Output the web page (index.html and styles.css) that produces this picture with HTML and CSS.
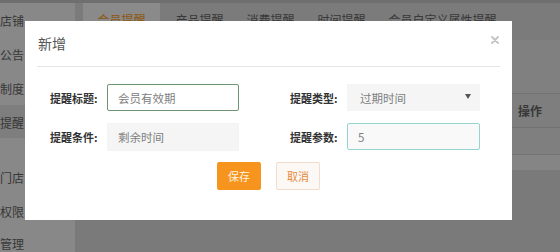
FILE: index.html
```html
<!DOCTYPE html>
<html lang="zh-CN">
<head>
<meta charset="utf-8">
<title>提醒设置 - 新增</title>
<link rel="stylesheet" href="styles.css">
</head>
<body>
<div class="page">
  <aside class="sidebar">
    <div class="nav-item">店铺</div>
    <div class="nav-item">公告</div>
    <div class="nav-item">制度</div>
    <div class="nav-item active">提醒</div>
    <div class="nav-item group-start">门店</div>
    <div class="nav-item">权限</div>
    <div class="nav-item last">管理</div>
  </aside>
  <main class="main">
    <nav class="tabs">
      <span class="tab active">会员提醒</span>
      <span class="tab">产品提醒</span>
      <span class="tab">消费提醒</span>
      <span class="tab">时间提醒</span>
      <span class="tab">会员自定义属性提醒</span>
    </nav>
    <div class="toolbar"></div>
    <div class="table">
      <div class="row head"><span class="cell grow"></span><span class="cell op">操作</span></div>
      <div class="row"><span class="cell grow"></span><span class="cell op"></span></div>
      <div class="row alt"><span class="cell grow"></span><span class="cell op"></span></div>
    </div>
  </main>
</div>

<div class="mask"></div>

<div class="modal">
  <div class="modal-header">
    <h3 class="modal-title">新增</h3>
    <button class="close" type="button" aria-label="关闭">
      <svg width="8" height="8" viewBox="0 0 8 8"><path d="M1 1 L7 7 M7 1 L1 7" stroke="#c3c3c3" stroke-width="1.8" stroke-linecap="round"/></svg>
    </button>
  </div>
  <div class="modal-body">
    <div class="form-grid">
      <label class="form-label">提醒标题:</label>
      <input class="input input-focus" type="text" value="会员有效期">
      <label class="form-label second">提醒类型:</label>
      <div class="input select"><span>过期时间</span><i class="caret"></i></div>

      <label class="form-label">提醒条件:</label>
      <div class="input readonly">剩余时间</div>
      <label class="form-label second">提醒参数:</label>
      <input class="input input-teal" type="text" value="5">
    </div>
    <div class="actions">
      <button class="btn btn-primary" type="button">保存</button>
      <button class="btn btn-default" type="button">取消</button>
    </div>
  </div>
</div>
</body>
</html>
```

FILE: styles.css
```css
* { box-sizing: border-box; }

html, body {
  margin: 0;
  padding: 0;
  width: 560px;
  height: 252px;
  overflow: hidden;
}

body {
  font-family: "Noto Sans CJK SC", "Liberation Sans", sans-serif;
  background: #dedede;
  color: #666;
  border-top: 3px solid #cacaca;
}

.page {
  display: flex;
  height: 249px;
}

/* sidebar */
.sidebar {
  width: 75px;
  flex: none;
  background: #f8f8f8;
  display: flex;
  flex-direction: column;
  overflow: hidden;
}

.nav-item {
  height: 34px;
  flex: none;
  display: flex;
  align-items: center;
  font-size: 12px;
  line-height: 1;
  color: #666;
  padding: 2px 0 0 0;
}

.nav-item.active {
  background: #e6e6e6;
  height: 33px;
}

.nav-item.group-start { margin-top: 22px; }

.nav-item.last {
  height: 24px;
  align-items: flex-end;
  padding: 0 0 2px 0;
}

/* main */
.main {
  flex: 1;
  display: flex;
  flex-direction: column;
  padding-left: 8px;
}

.tabs {
  height: 37px;
  display: flex;
  align-items: stretch;
  background: #e0e0e0;
  margin-left: -8px;
  padding-left: 8px;
}

.tab {
  display: flex;
  align-items: center;
  padding: 0 11.5px 5px;
  font-size: 12px;
  color: #666;
  white-space: nowrap;
}

.tab.active {
  background: #fbfbfb;
  color: #ff9f1c;
  padding: 0 14.5px 5px;
  margin-right: 4px;
}

.toolbar {
  height: 53px;
  background: #e9e9e9;
  margin-left: -8px;
}

.table {
  display: flex;
  flex-direction: column;
  margin-left: -8px;
}

.row {
  display: flex;
  height: 27px;
  background: #e8e8e8;
  border-bottom: 1px solid #d2d2d2;
}

.row.head {
  height: 35px;
  border-top: 1px solid #d2d2d2;
  background: #e6e6e6;
}

.row.alt {
  height: 15px;
  background: #f2f2f2;
  border-bottom: none;
}

.cell.grow { flex: 1; }

.cell.op {
  width: 48px;
  display: flex;
  align-items: center;
  font-size: 12px;
  font-weight: 700;
  color: #666;
  padding-left: 6px;
}

/* overlay */
.mask {
  position: fixed;
  inset: 0;
  background: rgba(0, 0, 0, 0.45);
}

/* modal */
.modal {
  position: fixed;
  left: 25px;
  top: 21px;
  width: 487px;
  height: 199px;
  background: #fff;
  display: flex;
  flex-direction: column;
}

.modal-header {
  height: 46px;
  margin: 0 12px;
  border-bottom: 1px solid #e5e5e5;
  display: flex;
  align-items: center;
  justify-content: space-between;
  padding-bottom: 1px;
}

.modal-title {
  margin: 0 0 0 1px;
  font-size: 14px;
  font-weight: 400;
  color: #555;
}

.close {
  border: 0;
  background: transparent;
  padding: 0;
  margin: 0 1px 6px 0;
  width: 8px;
  height: 8px;
  display: flex;
}

.modal-body {
  padding: 17px 32px 0 25px;
}

.form-grid {
  display: grid;
  grid-template-columns: 47px 132px 88px 133px;
  grid-auto-rows: 27px;
  column-gap: 10px;
  row-gap: 12px;
  align-items: center;
}

.form-label {
  font-size: 11px;
  font-weight: 700;
  color: #333;
  white-space: nowrap;
}

.form-label.second { margin-left: 41px; }

.input {
  height: 27px;
  width: 100%;
  margin: 0;
  border: 1px solid transparent;
  padding: 0 10px;
  font-family: "Noto Sans CJK SC", "Liberation Sans", sans-serif;
  font-size: 11.5px;
  color: #808080;
  background: #f5f5f5;
  outline: none;
  display: flex;
  align-items: center;
}

.input-focus {
  background: #fff;
  border-color: #6f9472;
  border-radius: 2px;
}

.input-teal {
  background: #f9f9f9;
  border-color: #94d6cf;
  border-radius: 2px;
}

.readonly {
  height: 28px;
  border-color: #f3f3f3;
}

.select {
  justify-content: space-between;
  padding: 0 8px 0 12px;
}

.caret {
  width: 0;
  height: 0;
  border-left: 3px solid transparent;
  border-right: 3px solid transparent;
  border-top: 5px solid #555;
  margin-top: -2px;
}

.actions {
  display: flex;
  justify-content: center;
  gap: 15px;
  margin-top: 12px;
  padding-left: 7px;
}

.btn {
  height: 28px;
  padding: 0 10px;
  font-family: "Noto Sans CJK SC", "Liberation Sans", sans-serif;
  font-size: 11px;
  border: 1px solid transparent;
  border-radius: 2px;
  cursor: pointer;
}

.btn-primary {
  background: #f7941d;
  border-color: #f7941d;
  color: #fff4e2;
}

.btn-default {
  background: #fbf8f5;
  border-color: #f2dccc;
  color: #ea8a3a;
}
```
